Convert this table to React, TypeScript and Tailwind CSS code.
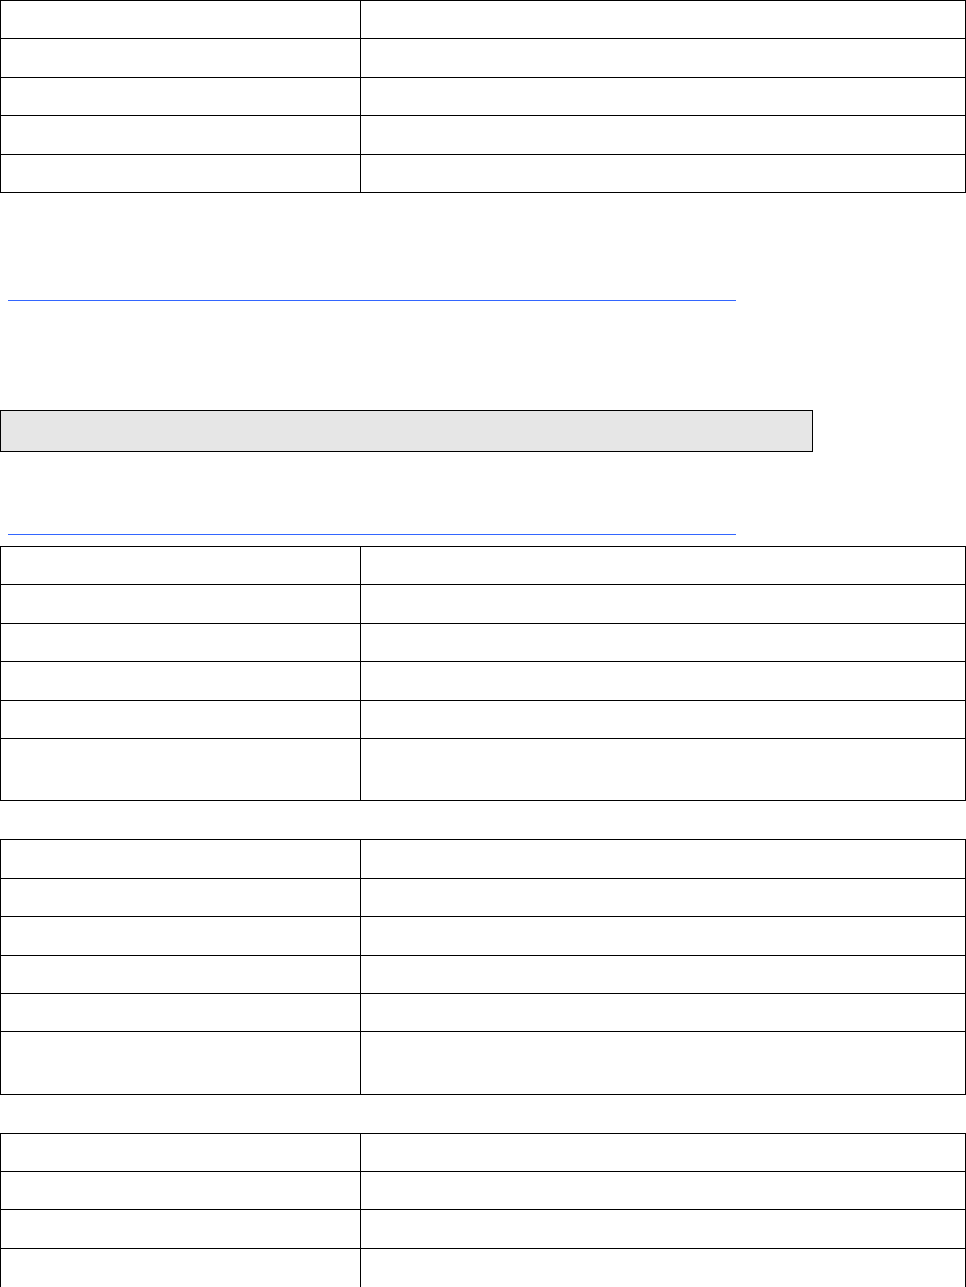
import React from 'react';

type Row = { tall?: boolean };

function FormTable({ rows, className = '' }: { rows: Row[]; className?: string }) {
  return (
    <div className={`w-[966px] border border-black ${className}`}>
      {rows.map((row, i) => (
        <div
          key={i}
          className={`flex ${i < rows.length - 1 ? 'border-b border-black' : ''} ${
            row.tall ? 'h-[61.4px]' : 'h-[38.4px]'
          }`}
        >
          <div className="w-[360px] shrink-0 border-r border-black"></div>
          <div className="flex-1"></div>
        </div>
      ))}
    </div>
  );
}

const plain = (n: number): Row[] => Array.from({ length: n }, () => ({}));

export default function App() {
  return (
    <div className="min-h-screen bg-white font-['Liberation_Sans',Arial,sans-serif] text-black">
      {/* Header table */}
      <FormTable rows={plain(5)} className="h-[193px]" />

      {/* Link underline */}
      <div className="mt-[107px] ml-[8px] h-px w-[728px] bg-[#3366ff]"></div>

      {/* Shaded box */}
      <div className="mt-[109px] h-[42px] w-[813px] border border-black bg-[#e6e6e6]"></div>

      {/* Second link underline */}
      <div className="mt-[82px] ml-[8px] h-px w-[728px] bg-[#3366ff]"></div>

      {/* Detail tables */}
      <FormTable rows={[...plain(5), { tall: true }]} className="mt-[11px]" />
      <FormTable rows={[...plain(5), { tall: true }]} className="mt-[38px]" />
      <FormTable rows={plain(4)} className="mt-[38px]" />
    </div>
  );
}
